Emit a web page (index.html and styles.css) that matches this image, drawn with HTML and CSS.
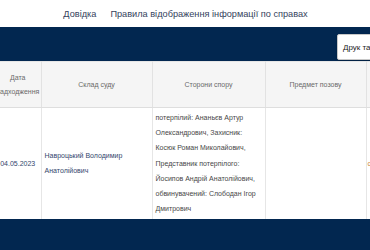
FILE: index.html
```html
<!DOCTYPE html>
<html lang="uk">
<head>
    <meta charset="UTF-8">
    <meta name="viewport" content="width=device-width, initial-scale=1.0">
    <title>Стан розгляду справ</title>
    <link rel="stylesheet" href="styles.css">
</head>
<body>
    <!-- верхнє меню -->
    <div class="top-nav">
        <a href="#">Довідка</a>
        <a href="#">Правила відображення інформації по справах</a>
    </div>

    <div class="toolbar">
        <button class="print-btn">Друк таблиці</button>
    </div>

    <!-- таблиця справ -->
    <div class="table-wrap">
        <table class="cases">
            <thead>
                <tr>
                    <th class="col-date">Дата<br>надходження</th>
                    <th class="col-judges">Склад суду</th>
                    <th class="col-parties">Сторони спору</th>
                    <th class="col-subject">Предмет позову</th>
                    <th class="col-more"></th>
                </tr>
            </thead>
            <tbody>
                <tr>
                    <td class="date">04.05.2023</td>
                    <td class="judges">Навроцький Володимир Анатолійович</td>
                    <td class="parties">потерпілий: Ананьєв Артур Олександрович, Захисник: Косюк Роман Миколайович, Представник потерпілого: Йосипов Андрій Анатолійович, обвинувачений: Слободан Ігор Дмитрович</td>
                    <td class="subject"></td>
                    <td class="more"><span class="mark">о</span></td>
                </tr>
            </tbody>
        </table>
    </div>

    <div class="footer"></div>
</body>
</html>
```

FILE: styles.css
```css
* {
    margin: 0;
    padding: 0;
    box-sizing: border-box;
}

body {
    font-family: 'Liberation Sans', Arial, sans-serif;
    background-color: #fff;
    width: 370px;
    overflow: hidden;
}

.top-nav {
    height: 27px;
    display: flex;
    justify-content: center;
    align-items: center;
    gap: 14px;
    padding-left: 1px;
}

.top-nav a {
    color: #34425c;
    font-size: 9.2px;
    text-decoration: none;
}

.toolbar {
    height: 34px;
    background-color: #022750;
    display: flex;
    align-items: flex-end;
    padding-left: 337px;
    padding-bottom: 1px;
    overflow: hidden;
}

.print-btn {
    flex-shrink: 0;
    width: 62px;
    height: 26px;
    background-color: #fff;
    border: 1px solid #c8c8c8;
    border-radius: 2px;
    box-shadow: 0 1px 2px rgba(0, 0, 0, 0.2);
    font-family: 'Liberation Sans', Arial, sans-serif;
    font-size: 8px;
    color: #222;
    text-align: left;
    padding-left: 5px;
    white-space: nowrap;
}

.table-wrap {
    overflow: hidden;
    height: 158px;
}

.cases {
    border-collapse: collapse;
    table-layout: fixed;
    margin-left: -5px;
    width: 460px;
    font-size: 7px;
}

.cases th {
    height: 46px;
    background-color: #f5f5f5;
    color: #6a6a6a;
    font-weight: normal;
    line-height: 14px;
    border-right: 1px solid #e2e2e2;
    border-bottom: 1px solid #dedede;
    border-top: 1px solid #e6e6e6;
    vertical-align: middle;
    text-align: center;
}

.cases td {
    height: 111px;
    border-right: 1px solid #e6e6e6;
    vertical-align: middle;
    line-height: 15.3px;
    padding: 1px 3px;
}

.col-date { width: 46px; }
.col-judges { width: 111px; }
.col-parties { width: 113px; }
.col-subject { width: 101px; }
.col-more { width: 89px; }

.date {
    text-align: center;
    color: #33466d;
    padding: 0;
}

.judges {
    color: #33466d;
    line-height: 17px;
}

.parties {
    color: #474747;
    padding-left: 2px;
}

.mark {
    color: #c87a2a;
    margin-left: -2px;
}

.footer {
    height: 32px;
    background-color: #022750;
}
```
